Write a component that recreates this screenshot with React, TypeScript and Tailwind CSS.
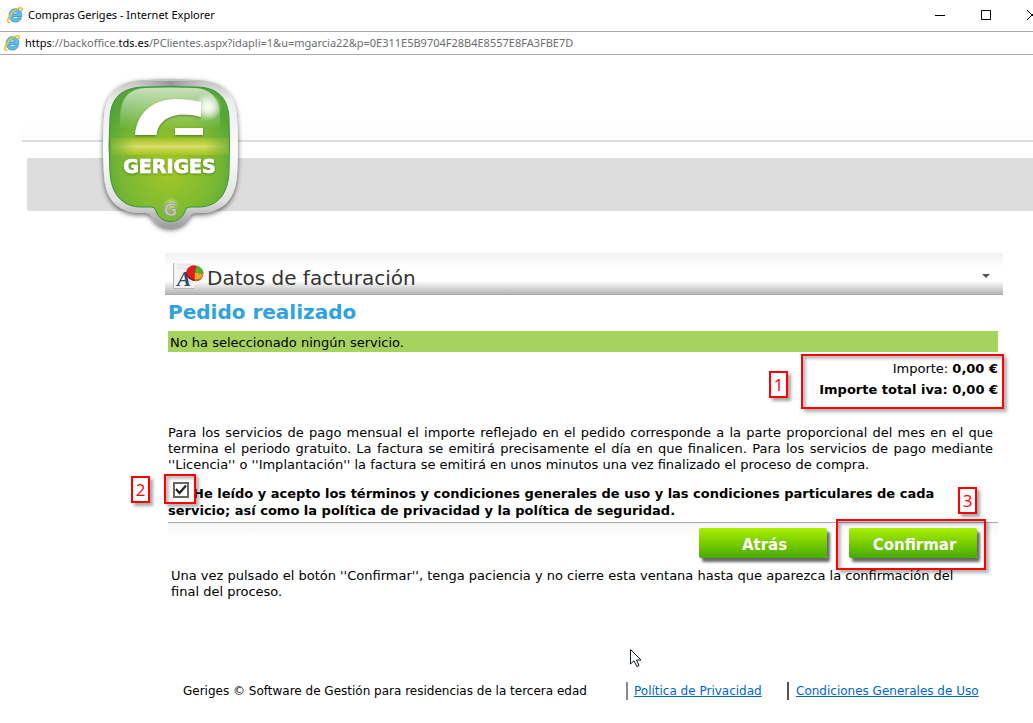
import { useState } from "react";

function ExplorerIcon() {
  return (
    <svg className="size-4 shrink-0" viewBox="0 0 16 16" aria-hidden="true">
      <path
        d="M14.800 9.500H5.800c.2 1.500 1.300 2.200 2.700 2.200 1 0 1.700-.3 2.200-.9h3.700c-.9 2.700-2.900 4.200-5.800 4.200-3.900 0-6.500-2.700-6.500-6.700 0-3.900 2.700-6.600 6.500-6.600 4 0 6.400 3 6.200 7.800zM5.800 7h5.200c-.2-1.300-1.100-2-2.500-2-1.500 0-2.400.7-2.700 2z"
        fill="#5fc0ee"
        stroke="#1c7fc0"
        strokeWidth="0.7"
      />
      <path d="M3.300 15C.4 16 0 13.800 1.600 10.800 3.800 6.500 8.500 2.200 12.300 1c2.800-.7 3.200.9 2.400 3.300" fill="none" stroke="#f3c22b" strokeWidth="1.700" />
    </svg>
  );
}

function Logo() {
  const shell =
    "M63 20Q90 18 118 20C144 21 156 35 157 58Q159 85 157 114C156 138 144 152 122 153H115Q111 153 110 156A22 22 0 0 1 71 156Q70 153 66 153H57C36 151 25 138 24 114Q22 85 24 58C25 35 37 21 63 20Z";
  const face =
    "M63 27Q90 26 118 27C138 28 148 38 149 58Q150 85 149 112C148 134 138 146 120 147H110Q106 147 105.500 150A15.500 15.500 0 0 1 75.500 150Q75 147 71 147H59C42 146 31 134 30 112Q28 85 30 58C31 38 41 28 63 27Z";
  return (
    <svg className="absolute top-0 left-[80px] h-[190px] w-[180px]" viewBox="0 0 180 190" role="img" aria-label="Geriges">
      <defs>
        <linearGradient id="metal" x1="0" y1="0" x2="0" y2="1">
          <stop offset="0" stopColor="#c0c0c0" />
          <stop offset="0.14" stopColor="#ececec" />
          <stop offset="0.5" stopColor="#fdfdfd" />
          <stop offset="0.82" stopColor="#e0e0e0" />
          <stop offset="1" stopColor="#9a9a9a" />
        </linearGradient>
        <linearGradient id="topShade">
          <stop offset="0" stopColor="#909090" stopOpacity="0" />
          <stop offset="0.5" stopColor="#808080" stopOpacity="0.7" />
          <stop offset="1" stopColor="#909090" stopOpacity="0" />
        </linearGradient>
        <radialGradient id="green" cx="0.5" cy="0.6" r="0.6">
          <stop offset="0" stopColor="#a4c824" />
          <stop offset="0.65" stopColor="#79b833" />
          <stop offset="1" stopColor="#56a536" />
        </radialGradient>
        <linearGradient id="gloss" x1="0" y1="0" x2="0" y2="1">
          <stop offset="0" stopColor="#fff" stopOpacity="0.68" />
          <stop offset="1" stopColor="#fff" stopOpacity="0" />
        </linearGradient>
        <linearGradient id="band" x1="0" y1="0" x2="0" y2="1">
          <stop offset="0" stopColor="#a0bf22" />
          <stop offset="0.5" stopColor="#d6dd68" />
          <stop offset="1" stopColor="#a8c41c" />
        </linearGradient>
        <linearGradient id="bandFade">
          <stop offset="0" stopColor="#68ad32" stopOpacity="0.8" />
          <stop offset="0.2" stopColor="#68ad32" stopOpacity="0" />
          <stop offset="0.8" stopColor="#68ad32" stopOpacity="0" />
          <stop offset="1" stopColor="#68ad32" stopOpacity="0.8" />
        </linearGradient>
        <radialGradient id="glow">
          <stop offset="0" stopColor="#fff" />
          <stop offset="0.4" stopColor="#fff" stopOpacity="0.75" />
          <stop offset="1" stopColor="#fff" stopOpacity="0" />
        </radialGradient>
        <filter id="drop" x="-20%" y="-20%" width="140%" height="140%">
          <feDropShadow dx="0" dy="2" stdDeviation="2.500" floodColor="#000" floodOpacity="0.6" />
        </filter>
        <filter id="soft" x="-20%" y="-20%" width="140%" height="140%">
          <feDropShadow dx="0" dy="1" stdDeviation="1.300" floodColor="#315c12" floodOpacity="0.65" />
        </filter>
      </defs>
      <path d={shell} fill="url(#metal)" filter="url(#drop)" />
      <rect x="55" y="21" width="71" height="5" fill="url(#topShade)" />
      <path d={face} fill="url(#green)" stroke="#35963a" strokeWidth="1" />
      <path d="M40 69V61C40 39 47 29 66 28Q90 27 114 28C133 29 140 39 140 61V69Z" fill="url(#gloss)" />
      <rect x="31" y="78" width="118" height="17" fill="url(#band)" />
      <rect x="31" y="78" width="118" height="17" fill="url(#bandFade)" />
      <g filter="url(#soft)" fill="#fff">
        <path d="M55 75C57 53 72 40 95 39Q109 39 121 42V57C95 50 78 59 76.500 75Z" />
        <path d="M95 68H123V75H95Z" />
      </g>
      <circle cx="128" cy="47" r="14" fill="url(#glow)" />
      <text x="89.500" y="113" textAnchor="middle" fontFamily="'DejaVu Sans', sans-serif" fontWeight="700" fontSize="19" fill="#fff" stroke="#fff" strokeWidth="0.700" filter="url(#soft)">
        GERIGES
      </text>
      <circle cx="91" cy="145" r="8" fill="url(#glow)" opacity="0.45" />
      <text x="90.500" y="156" textAnchor="middle" fontFamily="'DejaVu Sans', sans-serif" fontWeight="700" fontSize="17" fill="#c4c4c4" stroke="#8d9688" strokeWidth="0.600">
        G
      </text>
    </svg>
  );
}

function ReportIcon() {
  return (
    <svg className="h-7 w-8 shrink-0" viewBox="0 0 32 28" aria-hidden="true">
      <path d="M2 1H22V26H2Z" fill="#f4f4f4" />
      <path d="M1.500 1V26.500H22" fill="none" stroke="#b5b5b5" />
      <path d="M5 3H20M5 6H18M14 17H21M14 20H21" stroke="#dedede" />
      <text x="5" y="24" fontFamily="'Liberation Serif', serif" fontStyle="italic" fontWeight="700" fontSize="21" fill="#334a6c">A</text>
      <g transform="rotate(14 23 10)">
        <ellipse cx="23" cy="12" rx="8.500" ry="7" fill="#8f1010" />
        <ellipse cx="23" cy="10.500" rx="8.500" ry="7" fill="#d8201c" />
        <path d="M23 10.500V3.500C28 3.500 31.500 6.500 31.500 10.500Z" fill="#4cb52c" />
        <path d="M23 10.500H31.500C31.500 14.500 29 16.800 24.500 17.500Z" fill="#f0a526" />
        <path d="M24.500 17.500C29 16.800 31.500 14.500 31.500 10.500V12.500C31 16 29 18.300 24.800 19Z" fill="#b66a12" />
      </g>
    </svg>
  );
}

function Mark({ n, className }: { n: number; className: string }) {
  return (
    <span
      className={`absolute flex h-[27px] w-[19px] items-center justify-center border-2 border-[#f00] bg-white font-['Open_Sans',sans-serif] text-[17px] leading-none font-normal text-[#f00] shadow-[3px_3px_3px_rgba(0,0,0,0.35)] ${className}`}
    >
      {n}
    </span>
  );
}

function Frame({ className }: { className: string }) {
  return (
    <span
      className={`pointer-events-none absolute border-2 border-[#f00] shadow-[3px_3px_3px_rgba(0,0,0,0.3),inset_3px_3px_3px_rgba(0,0,0,0.25)] ${className}`}
    />
  );
}

function GreenButton({ children }: { children: string }) {
  return (
    <button
      type="button"
      className="h-[30px] w-32 rounded-xs bg-linear-to-b from-[#a9f000] to-[#45aa00] pt-1 pl-[3px] text-[15px] font-bold text-white shadow-[3px_4px_3px_rgba(0,0,0,0.6)]"
    >
      {children}
    </button>
  );
}

export default function App() {
  const [accepted, setAccepted] = useState(true);
  return (
    <div className="min-h-screen overflow-x-hidden bg-white font-['DejaVu_Sans',sans-serif] text-[13px] leading-4 text-black">
      <div className="flex h-[31px] items-center overflow-hidden pb-[2px] pl-[7px] font-['Noto_Sans',sans-serif] text-[11px]">
        <ExplorerIcon />
        <span className="ml-[5px] whitespace-nowrap">Compras Geriges - Internet Explorer</span>
        <div className="-mr-[5px] ml-auto flex shrink-0 gap-[34px]">
          <button type="button" aria-label="Minimizar">
            <svg className="size-3" viewBox="0 0 12 12"><path d="M1 6.500H11" stroke="#000" /></svg>
          </button>
          <button type="button" aria-label="Maximizar">
            <svg className="size-3" viewBox="0 0 12 12"><path d="M1.500 1.500H10.500V10.500H1.500Z" fill="none" stroke="#000" /></svg>
          </button>
          <button type="button" aria-label="Cerrar">
            <svg className="size-3" viewBox="0 0 12 12"><path d="M1 1L11 11M11 1L1 11" stroke="#000" /></svg>
          </button>
        </div>
      </div>
      <div className="flex h-6 items-center border-y border-[#aaa] pl-1 font-['Noto_Sans',sans-serif] text-[11px] text-[#6d6d6d]">
        <ExplorerIcon />
        <span className="ml-[5px] whitespace-nowrap">
          <span className="text-black">https</span>://backoffice.<span className="text-black">tds.es</span>/PClientes.aspx?idapli=1&amp;u=mgarcia22&amp;p=0E311E5B9704F28B4E8557E8FA3FBE7D
        </span>
      </div>

      <header className="relative mt-[5px] pt-5">
        <div className="ml-[22px] h-[62px] border-b-2 border-[#dcdcdc] bg-linear-to-b from-white from-70% to-[#fcfcfc]" />
        <div className="mt-4 ml-[27px] h-[53px] rounded-l-xs bg-[#ddd]" />
        <Logo />
      </header>

      <main className="mt-[42px] mr-[30px] ml-[165px]">
        <button
          type="button"
          className="flex h-[42px] w-full items-center border-b border-[#aaa] bg-[linear-gradient(to_bottom,#f1f1f1_0%,#fafafa_20%,#fff_35%,#fff_68%,#b5b5b5_100%)] pt-1 pr-[13px] pl-[7px] text-left text-[20px] text-[#333]"
        >
          <ReportIcon />
          <span className="ml-[3px] pt-1">Datos de facturación</span>
          <svg className="ml-auto h-1 w-2" viewBox="0 0 8 4" aria-hidden="true"><path d="M0 0H8L4 4Z" fill="#555" /></svg>
        </button>

        <div className="mr-[5px] ml-[3px]">
          <h1 className="mt-1 h-8 text-[20px] leading-[26px] font-bold text-[#2fa3df]">Pedido realizado</h1>
          <p className="h-[21px] bg-[#a6d35e] pt-1 pl-[2px]">No ha seleccionado ningún servicio.</p>

          <div className="relative pt-1.5 text-right leading-[21px]">
            <p>Importe: <b>0,00 €</b></p>
            <p className="font-bold">Importe total iva: 0,00 €</p>
            <Frame className="top-[2px] -right-[6px] h-[55px] w-[203px]" />
            <Mark n={1} className="top-[19px] right-[210px]" />
          </div>

          <p className="mt-[25px] mr-[5px] text-justify">
            Para los servicios de pago mensual el importe reflejado en el pedido corresponde a la parte proporcional del mes en el que termina el periodo gratuito. La factura se emitirá precisamente el día en que finalicen. Para los servicios de pago mediante ''Licencia'' o ''Implantación'' la factura se emitirá en unos minutos una vez finalizado el proceso de compra.
          </p>

          <div className="relative mt-2 h-[37px] pt-px font-bold">
            <label className="block pr-5 leading-[17px]">
              <input
                type="checkbox"
                checked={accepted}
                onChange={(e) => setAccepted(e.target.checked)}
                className="peer mr-1 ml-[5px] size-4 appearance-none border-2 border-[#666] bg-white align-[0px]"
              />
              <svg className="pointer-events-none absolute top-0 left-[5px] hidden size-4 peer-checked:block" viewBox="0 0 16 16" aria-hidden="true">
                <path d="M3 8L6.500 12L13 4.500" fill="none" stroke="#222" strokeWidth="2.200" />
              </svg>
              He leído y acepto los términos y condiciones generales de uso y las condiciones particulares de cada servicio; así como la política de privacidad y la política de seguridad.
            </label>
            <Frame className="-top-[7px] -left-1 h-[30px] w-8" />
            <Mark n={2} className="-top-[5px] -left-[37px]" />
            <Mark n={3} className="top-[6px] right-[21px]" />
          </div>

          <div className="mt-1 flex justify-end gap-[22px] border-t border-[#aaa] bg-linear-to-b from-[#f5f5f5] to-white to-40% pt-[5px] pr-[21px]">
            <GreenButton>Atrás</GreenButton>
            <div className="relative flex">
              <GreenButton>Confirmar</GreenButton>
              <Frame className="-top-[9px] -left-[13px] h-[51px] w-[150px]" />
            </div>
          </div>

          <p className="mt-[10px] mr-5 ml-[3px]">
            Una vez pulsado el botón ''Confirmar'', tenga paciencia y no cierre esta ventana hasta que aparezca la confirmación del final del proceso.
          </p>
        </div>

        <svg className="mt-12 ml-[464px] h-5 w-3.5" viewBox="0 0 14 20" aria-hidden="true">
          <path d="M1.500 1.500V16L5 12.800L7.800 18.500L10 17.500L7.500 12H12Z" fill="#fff" stroke="#111827" />
        </svg>

        <footer className="mx-[18px] mt-[14px] grid grid-cols-[443fr_161fr_198fr] items-center text-[12px] leading-[18px] whitespace-nowrap">
          <span>Geriges © Software de Gestión para residencias de la tercera edad</span>
          <span className="border-l-2 border-[#888] pl-[6px]">
            <a href="#privacidad" className="text-[#06c] underline">Política de Privacidad</a>
          </span>
          <span className="border-l-2 border-[#555] pl-[7px]">
            <a href="#condiciones" className="text-[#06c] underline">Condiciones Generales de Uso</a>
          </span>
        </footer>
      </main>
    </div>
  );
}
